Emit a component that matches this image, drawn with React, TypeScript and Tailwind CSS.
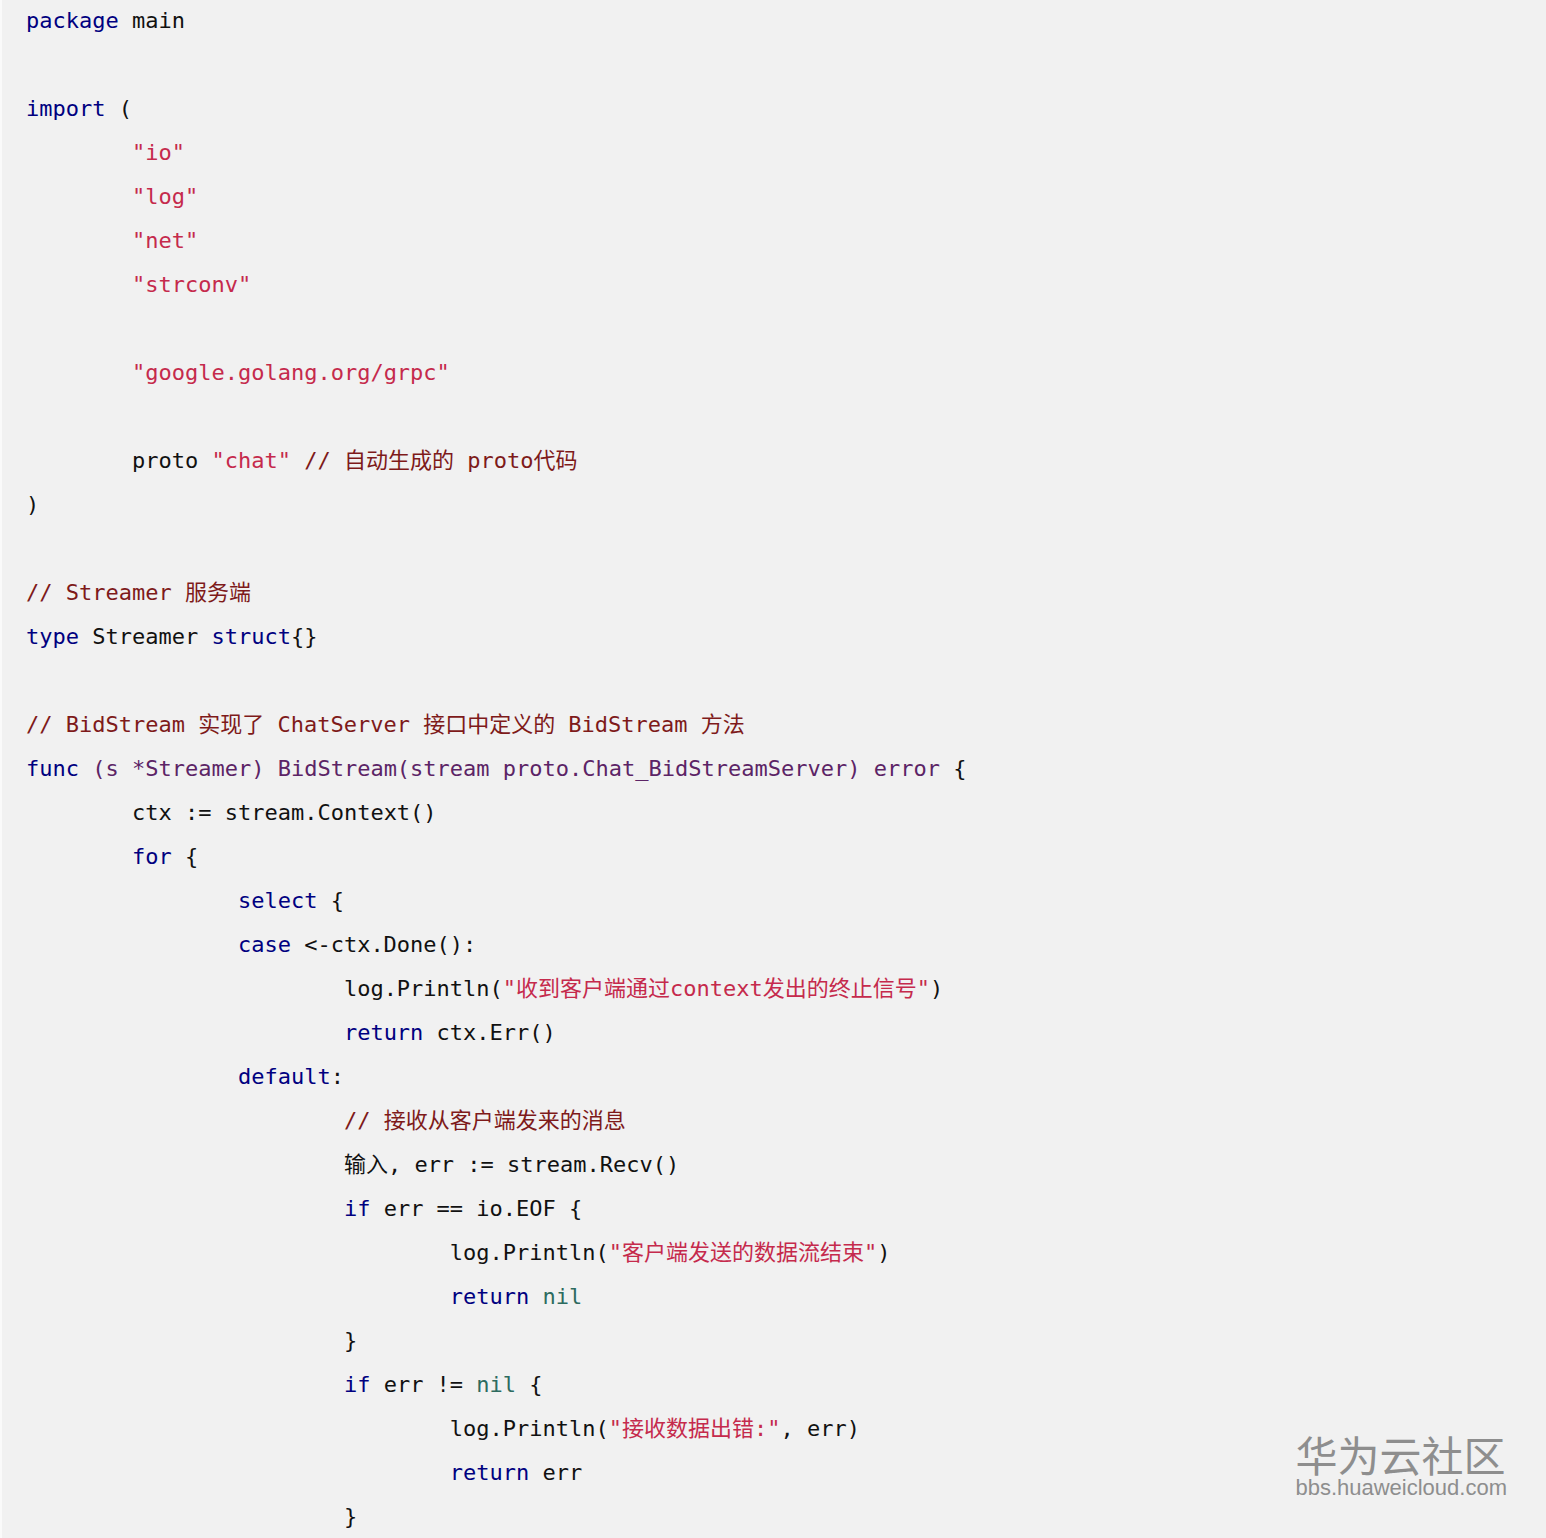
type Seg = [string, string];

const K = "text-[#000080]";
const S = "text-[#c52a4c]";
const C = "text-[#7e1a1a]";
const P = "text-[#5c2466]";
const N = "text-[#2d6b5f]";
const T = "";

const lines: Seg[][] = [
  [[K, "package"], [T, " main"]],
  [],
  [[K, "import"], [T, " ("]],
  [[T, "\t"], [S, '"io"']],
  [[T, "\t"], [S, '"log"']],
  [[T, "\t"], [S, '"net"']],
  [[T, "\t"], [S, '"strconv"']],
  [],
  [[T, "\t"], [S, '"google.golang.org/grpc"']],
  [],
  [[T, "\tproto "], [S, '"chat"'], [T, " "], [C, "// 自动生成的 proto代码"]],
  [[T, ")"]],
  [],
  [[C, "// Streamer 服务端"]],
  [[K, "type"], [T, " Streamer "], [K, "struct"], [T, "{}"]],
  [],
  [[C, "// BidStream 实现了 ChatServer 接口中定义的 BidStream 方法"]],
  [[K, "func"], [T, " "], [P, "(s *Streamer) BidStream(stream proto.Chat_BidStreamServer) error"], [T, " {"]],
  [[T, "\tctx := stream.Context()"]],
  [[T, "\t"], [K, "for"], [T, " {"]],
  [[T, "\t\t"], [K, "select"], [T, " {"]],
  [[T, "\t\t"], [K, "case"], [T, " <-ctx.Done():"]],
  [[T, "\t\t\tlog.Println("], [S, '"收到客户端通过context发出的终止信号"'], [T, ")"]],
  [[T, "\t\t\t"], [K, "return"], [T, " ctx.Err()"]],
  [[T, "\t\t"], [K, "default"], [T, ":"]],
  [[T, "\t\t\t"], [C, "// 接收从客户端发来的消息"]],
  [[T, "\t\t\t输入, err := stream.Recv()"]],
  [[T, "\t\t\t"], [K, "if"], [T, " err == io.EOF {"]],
  [[T, "\t\t\t\tlog.Println("], [S, '"客户端发送的数据流结束"'], [T, ")"]],
  [[T, "\t\t\t\t"], [K, "return"], [T, " "], [N, "nil"]],
  [[T, "\t\t\t}"]],
  [[T, "\t\t\t"], [K, "if"], [T, " err != "], [N, "nil"], [T, " {"]],
  [[T, "\t\t\t\tlog.Println("], [S, '"接收数据出错:"'], [T, ", err)"]],
  [[T, "\t\t\t\t"], [K, "return"], [T, " err"]],
  [[T, "\t\t\t}"]],
];

export default function App() {
  return (
    <div className="relative h-[1538px] w-full overflow-hidden bg-[#f1f1f1] border-l-2 border-[#fafafa]">
      <pre className="-mt-[1px] pl-[24px] font-['DejaVu_Sans_Mono','Noto_Sans_CJK_SC',monospace] text-[22px] text-[#111] [tab-size:8]">
        {lines.map((segs, i) => (
          <div key={i} className="h-[44px] leading-[44px] whitespace-pre">
            {segs.length === 0 ? " " : segs.map(([cls, txt], j) => (
              <span key={j} className={cls}>
                {txt}
              </span>
            ))}
          </div>
        ))}
      </pre>

      {/* watermark */}
      <div className="absolute right-[39px] bottom-[39px] flex flex-col items-start text-[#8e8e8e]">
        <div className="font-['Noto_Sans_CJK_SC',sans-serif] text-[42px] leading-[46px]">
          华为云社区
        </div>
        <div className="font-['Liberation_Sans',Arial,sans-serif] text-[22px] leading-[22px]">
          bbs.huaweicloud.com
        </div>
      </div>
    </div>
  );
}
